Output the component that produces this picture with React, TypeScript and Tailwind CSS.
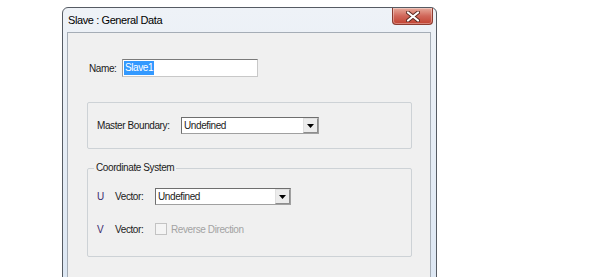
import React from 'react';

const ui = { fontFamily: '"Liberation Sans Narrow", "Liberation Sans", Arial, sans-serif' };

function Dropdown({ value, width }: { value: string; width: string }) {
  return (
    <div className={`${width} h-[17px] flex bg-white border border-[#a0a0a0] border-t-[#6e6e6e] border-l-[#6e6e6e]`}>
      <span className="flex-1 pl-[2px] text-[10px] leading-[15px] tracking-[-0.4px] text-[#1b1b1b]">{value}</span>
      {/* arrow button */}
      <span className="w-[15px] h-[15px] bg-[#ececec] border border-[#e0e0e0] border-r-[#8d8d8d] border-b-[#8d8d8d] flex items-center justify-center">
        <svg width="7" height="4" viewBox="0 0 7 4">
          <path d="M0 0h7L3.5 4z" fill="#000" />
        </svg>
      </span>
    </div>
  );
}

function CloseButton() {
  return (
    <div className="w-[41px] h-[17px] rounded-b-[4px] border border-t-0 border-[#8b3b2f] bg-gradient-to-b from-[#e6a99b] via-[#d0675a] to-[#c1402f] flex items-center justify-center shadow-[inset_0_0_0_1px_rgba(255,255,255,0.35)]">
      <svg width="14" height="11" viewBox="0 0 14 11">
        <path d="M2 1.5L12 9.5M12 1.5L2 9.5" stroke="#5a2a22" strokeWidth="4" strokeLinecap="round" />
        <path d="M2 1.5L12 9.5M12 1.5L2 9.5" stroke="#ffffff" strokeWidth="2.2" strokeLinecap="round" />
      </svg>
    </div>
  );
}

export default function App() {
  return (
    <div className="w-[600px] h-[277px] bg-white overflow-hidden pl-[62px] pt-[7px]" style={ui}>
      {/* dialog frame */}
      <div className="w-[375px] h-[300px] border border-[#555b63] rounded-t-[6px] bg-gradient-to-b from-[#eef2f7] to-[#dbe6f3] flex flex-col">
        {/* title bar */}
        <div className="h-[24px] flex shrink-0">
          <span
            className="flex-1 pl-[5px] pt-[5px] text-[11px] leading-[14px] tracking-[-0.4px] text-black"
            style={{ fontFamily: '"Liberation Sans", Arial, sans-serif' }}
          >
            Slave : General Data
          </span>
          <div className="mr-[3px]">
            <CloseButton />
          </div>
        </div>

        {/* client area */}
        <div className="ml-[4px] w-[364px] flex-1 bg-[#f0f0f0] border border-[#a5adb6] flex flex-col text-[10px] tracking-[-0.4px]">
          {/* name */}
          <div className="mt-[26px] pl-[21px] flex items-center h-[18px]">
            <span className="w-[33px] text-[#1b1b1b]">Name:</span>
            <div className="w-[136px] h-[18px] bg-white border border-[#c8c8c8] border-t-[#7a7a7a] border-l-[#a0a0a0] flex items-center pl-[1px]">
              <span className="bg-[#3399ff] text-white leading-[14px] px-[1px]">Slave1</span>
            </div>
          </div>

          {/* master boundary group */}
          <div className="ml-[19px] mt-[25px] w-[325px] h-[47px] border border-[#cdd2d6] rounded-[2px] flex items-center pl-[9px]">
            <span className="w-[84px] text-[#1b1b1b]">Master Boundary:</span>
            <Dropdown value="Undefined" width="w-[138px]" />
          </div>

          {/* coordinate system group */}
          <fieldset className="ml-[19px] mt-[13px] w-[325px] h-[95px] border border-[#cdd2d6] rounded-[2px]">
            <legend className="ml-[6px] px-[2px] leading-[12px] text-[#1b1b1b]">Coordinate System</legend>
            <div className="mt-[14px] pl-[9px] flex items-center h-[17px]">
              <span className="w-[18px] text-[#3b2b6e]">U</span>
              <span className="w-[40px] text-[#1b1b1b]">Vector:</span>
              <Dropdown value="Undefined" width="w-[136px]" />
            </div>
            <div className="mt-[17px] pl-[9px] flex items-center h-[14px]">
              <span className="w-[18px] text-[#3b2b6e]">V</span>
              <span className="w-[40px] text-[#1b1b1b]">Vector:</span>
              <span className="w-[12px] h-[12px] border border-[#c3c3c3] bg-[#f4f4f4]" />
              <span className="ml-[4px] text-[#a3a3a3]">Reverse Direction</span>
            </div>
          </fieldset>
        </div>
      </div>
    </div>
  );
}
